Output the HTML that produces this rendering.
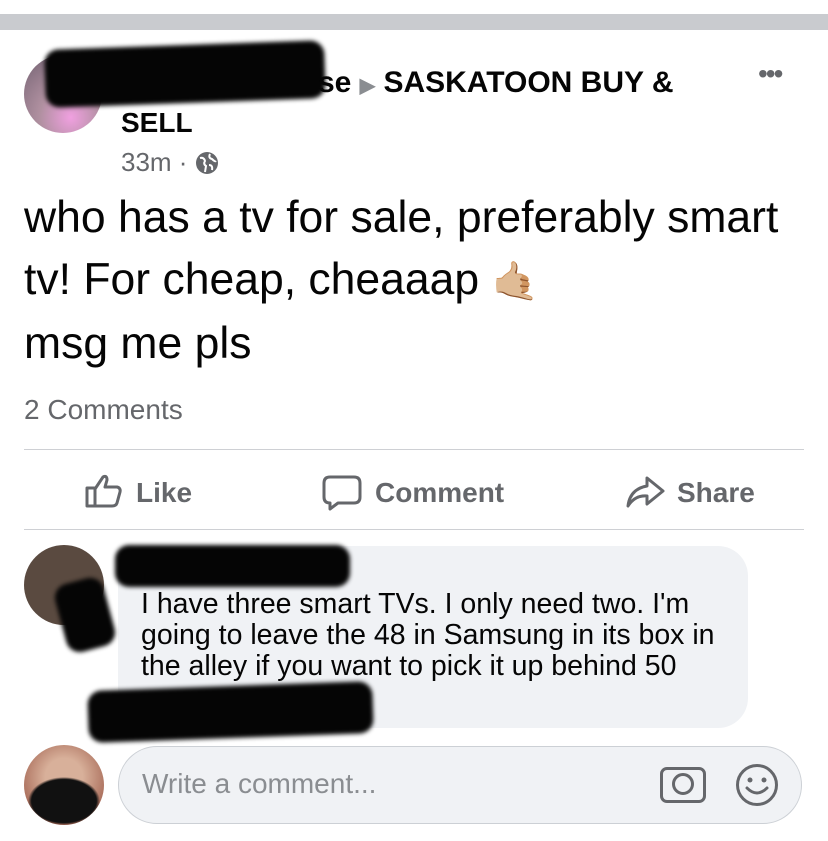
<!DOCTYPE html><html><head><style>
body{margin:0;width:828px;height:841px;background:#fff;font-family:"Liberation Sans",sans-serif;position:relative;overflow:hidden}
.a{position:absolute}
.blk{position:absolute;background:#050505;border-radius:14px;filter:blur(2px)}
</style></head><body>
<div class="a" style="left:0;top:14px;width:828px;height:16px;background:#c9cbcf"></div>
<div class="a" style="left:24px;top:55px;width:78px;height:78px;border-radius:50%;background:radial-gradient(circle at 60% 80%,#f0a0e0,#b090a0 40%,#706070)"></div>
<div class="blk" style="left:45px;top:45px;width:280px;height:58px;transform:rotate(-2deg)"></div>
<div class="a" style="left:318px;top:66px;font-size:30px;font-weight:bold;color:#050505;white-space:nowrap">se <span style="color:#8a8d91;font-size:20px">▶</span> SASKATOON BUY &amp;</div>
<div class="a" style="left:121px;top:107px;font-size:28px;font-weight:bold;color:#050505">SELL</div>
<div class="a" style="left:121px;top:147px;font-size:26px;color:#65676b">33m · <svg width="24" height="24" viewBox="0 0 24 24" style="vertical-align:-4px"><circle cx="12" cy="12" r="11" fill="#65676b"/><path d="M5 7 Q9 6 10 10 Q8 13 11 15 L10 21 M15 3 Q13 7 17 8 Q20 11 21 10 M14 14 Q18 14 17 19" stroke="#fff" stroke-width="2" fill="none"/></svg></div>
<div class="a" style="left:758px;top:58px;font-size:28px;color:#65676b;letter-spacing:-2px">•••</div>
<div class="a" style="left:24px;top:187px;font-size:44.5px;line-height:62px;color:#050505;white-space:nowrap">who has a tv for sale, preferably smart<br>tv! For cheap, cheaaap <span style="font-size:38px">🤙🏼</span><br>msg me pls</div>
<div class="a" style="left:24px;top:394px;font-size:28px;color:#65676b">2 Comments</div>
<div class="a" style="left:24px;top:449px;width:780px;height:1px;background:#ced0d4"></div>
<div class="a" style="left:0;top:475px;width:828px;font-size:28px;font-weight:bold;color:#65676b">
<svg class="a" style="left:84px;top:-2px" width="40" height="36" viewBox="0 0 40 36"><path d="M3 15 H11 V33 H3 Z M11 16 L19 4 Q23 2 23 7 L21 14 H33 Q37 15 36 19 L33 30 Q32 33 28 33 H11" fill="none" stroke="#65676b" stroke-width="3" stroke-linejoin="round"/></svg>
<span class="a" style="left:136px;top:2px">Like</span>
<svg class="a" style="left:322px;top:0" width="40" height="36" viewBox="0 0 40 36"><path d="M8 2 H32 Q38 2 38 8 V22 Q38 28 32 28 H16 L8 34 V28 Q2 28 2 22 V8 Q2 2 8 2 Z" fill="none" stroke="#65676b" stroke-width="3" stroke-linejoin="round"/></svg>
<span class="a" style="left:375px;top:2px">Comment</span>
<svg class="a" style="left:625px;top:0" width="40" height="34" viewBox="0 0 40 34"><path d="M22 3 L38 16 L22 29 V21 Q10 20 3 31 Q5 14 22 11 Z" fill="none" stroke="#65676b" stroke-width="3" stroke-linejoin="round"/></svg>
<span class="a" style="left:677px;top:2px">Share</span></div>
<div class="a" style="left:24px;top:529px;width:780px;height:1px;background:#ced0d4"></div>
<div class="a" style="left:24px;top:545px;width:80px;height:80px;border-radius:50%;background:#5a4a40"></div>
<div class="a" style="left:118px;top:546px;width:630px;height:182px;border-radius:30px;background:#f0f2f5"></div>
<div class="blk" style="left:115px;top:545px;width:235px;height:42px"></div>
<div class="blk" style="left:60px;top:580px;width:50px;height:70px;transform:rotate(-15deg)"></div>
<div class="a" style="left:141px;top:589px;font-size:28.5px;line-height:31px;color:#050505;white-space:nowrap">I have three smart TVs. I only need two. I'm<br>going to leave the 48 in Samsung in its box in<br>the alley if you want to pick it up behind 50</div>
<div class="blk" style="left:88px;top:686px;width:285px;height:52px;transform:rotate(-2deg)"></div>
<div class="a" style="left:24px;top:745px;width:80px;height:80px;border-radius:50%;background:radial-gradient(ellipse 45% 30% at 50% 70%,#111 90%,transparent 100%),radial-gradient(circle at 50% 40%,#d8b09a 30%,#8a4030)"></div>
<div class="a" style="left:118px;top:746px;width:684px;height:78px;border-radius:39px;background:#f0f2f5;border:1px solid #ccd0d5;box-sizing:border-box"></div>
<div class="a" style="left:142px;top:768px;font-size:28px;color:#8a8d91">Write a comment...</div>
<div class="a" style="left:660px;top:767px;width:46px;height:36px;border:3px solid #65676b;border-radius:7px;box-sizing:border-box"></div>
<div class="a" style="left:672px;top:773px;width:22px;height:22px;border:3px solid #65676b;border-radius:50%;box-sizing:border-box"></div>
<svg class="a" style="left:735px;top:763px" width="44" height="44" viewBox="0 0 44 44"><circle cx="22" cy="22" r="19.5" fill="none" stroke="#65676b" stroke-width="3"/><circle cx="15" cy="17" r="2.5" fill="#65676b"/><circle cx="29" cy="17" r="2.5" fill="#65676b"/><path d="M12 25 Q22 35 32 25" fill="none" stroke="#65676b" stroke-width="3" stroke-linecap="round"/></svg>
</body></html>
